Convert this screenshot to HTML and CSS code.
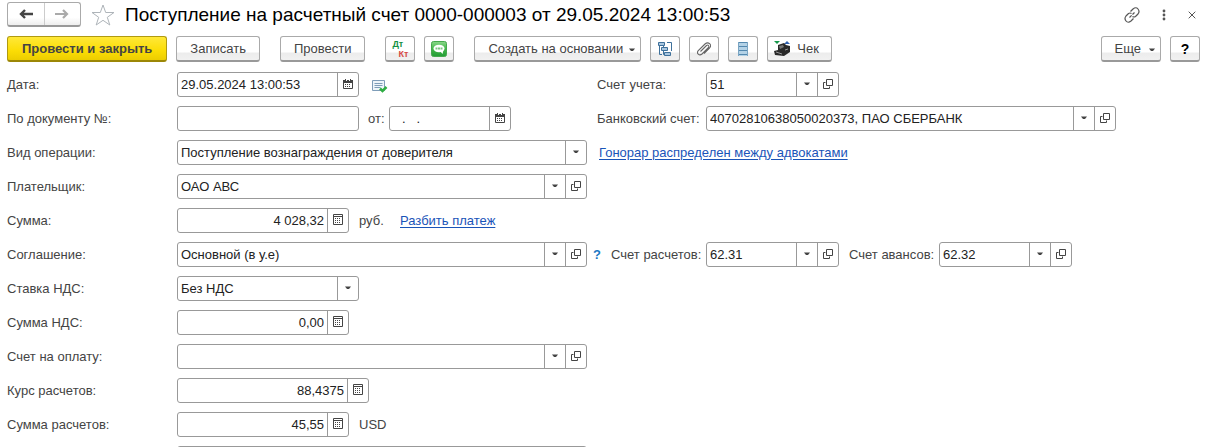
FILE: index.html
```html
<!DOCTYPE html>
<html lang="ru">
<head>
<meta charset="utf-8">
<title>Поступление на расчетный счет</title>
<link rel="stylesheet" href="styles.css">
</head>
<body>
<svg class="sprite" aria-hidden="true">
  <symbol id="caret" viewBox="0 0 6 4"><path d="M0 .5h6L4 3H2z" fill="#444"/></symbol>
  <symbol id="open" viewBox="0 0 10 10"><path d="M3.500.5h6v6h-6zM2.500 3.500h-2v6h6v-2" fill="none" stroke="#444"/></symbol>
  <symbol id="calendar" viewBox="0 0 10 10"><path d="M.5 2.500h9v7h-9z" fill="#fff" stroke="#444"/><path d="M0 1h10v3H0z" fill="#444"/><path d="M2 0h1v2H2zM7 0h1v2H7z" fill="#444"/><path d="M3 1h1v1H3zM6 1h1v1H6z" fill="#fff"/><path d="M2 5.500h6M2 7.500h6" stroke="#444" stroke-dasharray="1 1"/></symbol>
  <symbol id="calc" viewBox="0 0 10 11"><path d="M.5.5h9v10h-9zM1 2.500h8" fill="none" stroke="#444"/><path d="M2 4.500h6M2 6.500h6M2 8.500h6" stroke="#444" stroke-dasharray="1 1"/></symbol>
</svg>

<header class="header">
  <nav class="history" aria-label="История">
    <button class="history-btn" aria-label="Назад"><svg width="14" height="10" viewBox="0 0 14 10"><path d="M14 5H2M6 1 2 5l4 4" fill="none" stroke="#444" stroke-width="2.400"/></svg></button>
    <button class="history-btn" aria-label="Вперед"><svg width="14" height="10" viewBox="0 0 14 10"><path d="M0 5h12M8 1l4 4-4 4" fill="none" stroke="#aaa" stroke-width="2.200"/></svg></button>
  </nav>
  <button class="plain star" aria-label="В избранное"><svg width="24" height="22" viewBox="0 0 24 22"><path d="M12 1l2.700 7.500H23l-6.700 4.800L18.800 21 12 16.300 5.200 21l2.500-7.700L1 8.500h8.300z" fill="none" stroke="#aeb4b9"/></svg></button>
  <h1 class="title">Поступление на расчетный счет 0000-000003 от 29.05.2024 13:00:53</h1>
  <div class="window-tools">
    <button class="plain" aria-label="Ссылка"><svg width="16" height="16" viewBox="0 0 16 16"><g fill="none" stroke="#555" stroke-width="1.200"><path d="M6.500 4.500 9 2q3-2.500 5 0t0 5l-2.500 2.500q-1.500 1-3 0M9.500 11.500 7 14q-3 2.500-5 0t0-5l2.500-2.500q1.500-1 3 0"/><path d="M5.500 10.500l5-5" stroke-dasharray="3 1.200"/></g></svg></button>
    <button class="plain" aria-label="Меню"><svg width="4" height="12" viewBox="0 0 4 12"><g fill="#555"><circle cx="2" cy="2" r="1.400"/><circle cx="2" cy="6" r="1.400"/><circle cx="2" cy="10" r="1.400"/></g></svg></button>
    <button class="plain" aria-label="Закрыть"><svg width="8" height="8" viewBox="0 0 8 8"><path d="M.7.7l6.600 6.600M7.300.7.7 7.300" stroke="#555"/></svg></button>
  </div>
</header>

<div class="toolbar">
  <button class="btn btn-primary">Провести и закрыть</button>
  <button class="btn">Записать</button>
  <button class="btn apart">Провести</button>
  <button class="btn btn-icon apart" aria-label="Проводки"><span class="dtkt"><span class="dt">Дт</span><span class="kt">Кт</span></span></button>
  <button class="btn btn-icon" aria-label="Сообщение"><svg width="16" height="16" viewBox="0 0 16 16"><defs><linearGradient id="g" x2="0" y2="1"><stop stop-color="#8bd88b"/><stop offset=".5" stop-color="#42b649"/><stop offset="1" stop-color="#239b35"/></linearGradient></defs><rect x=".5" y=".5" width="15" height="15" rx="2" fill="url(#g)" stroke="#45a94d"/><ellipse cx="8" cy="7.500" rx="5.500" ry="3.800" fill="#fff"/><path d="M9 10l2.500 3 1-4z" fill="#fff"/><path d="M4.500 7.500h7" stroke="#7cc882" stroke-width="2" stroke-dasharray="2 .5"/></svg></button>
  <button class="btn btn-menu apart">Создать на основании <svg class="caret"><use href="#caret"/></svg></button>
  <button class="btn btn-icon" aria-label="Структура подчиненности"><svg width="14" height="14" viewBox="0 0 14 14"><g fill="#a9c6df" stroke="#3f719b"><path d="M.5.5h6v3h-6zM3.500 5.500h6v3h-6zM6.500 10.500h6v3h-6z"/><path d="M1.500 4v8.500H4M5.500 9v3.500h1M5.500 4v1M9 .5h4.500V9" fill="none"/></g></svg></button>
  <button class="btn btn-icon" aria-label="Файлы"><svg width="14" height="14" viewBox="0 0 14 14"><path d="M3.500 9.500l6-6q1.300-1 2 0t0 2L5 12q-2 1.700-3.700.2T1.300 8.500L8 2q2.500-2.200 4.600-.3T12.500 6L7 11.500" fill="none" stroke="#666" stroke-width="1.100"/></svg></button>
  <button class="btn btn-icon" aria-label="Журнал"><svg width="10" height="14" viewBox="0 0 10 14"><path d="M0 0h10v14H0z" fill="#b4d2e6"/><path d="M0 .5h10M0 4.500h10M0 8.500h10M0 12.500h10" stroke="#5488ae"/><path d="M.5 0v14M9.500 0v14" stroke="#7aa5c3"/></svg></button>
  <button class="btn btn-check"><svg width="18" height="16" viewBox="0 0 18 16"><path d="M1 0h6L4 3z" fill="#16984a"/><path d="M14 0l3 3h-6z" fill="#2e5fae"/><path d="M5 4l6-2 2 2 4 1v6l-6 4-9-1-1-4 4-1z" fill="#292929"/><path d="M6 5l4-1 1 2-4 2z" fill="#777"/><path d="M3 11l6 2M12 9l3-1" stroke="#999"/></svg>Чек</button>
  <div class="toolbar-end">
    <button class="btn btn-menu btn-more">Еще <svg class="caret"><use href="#caret"/></svg></button>
    <button class="btn btn-icon help">?</button>
  </div>
</div>

<form class="form">
  <div class="row">
    <label class="label" for="date">Дата:</label>
    <div class="main">
      <div class="field w-date"><input id="date" value="29.05.2024 13:00:53"><button type="button" aria-label="Календарь"><svg class="i10"><use href="#calendar"/></svg></button></div>
      <svg class="posted" width="16" height="13" viewBox="0 0 16 13"><path d="M.5.5h12v10H.5z" fill="#eef5fa" stroke="#7f9db9"/><path d="M2.500 3.500h8M2.500 5.500h8M2.500 7.500h6" stroke="#7f9db9"/><path d="M8 8.500l2.500 2.500 4-4" fill="none" stroke="#2fae43" stroke-width="2.500"/></svg>
    </div>
    <div class="side">
      <label class="side-label" for="acc">Счет учета:</label>
      <div class="field w-acc"><input id="acc" value="51"><button type="button" aria-label="Выбрать"><svg class="caret"><use href="#caret"/></svg></button><button type="button" aria-label="Открыть"><svg class="i10"><use href="#open"/></svg></button></div>
    </div>
  </div>

  <div class="row">
    <label class="label" for="num">По документу №:</label>
    <div class="main">
      <div class="field w-date"><input id="num"></div>
      <label class="from" for="from">от:</label>
      <div class="field w-from"><input id="from" class="blank-date" value=".&nbsp;&nbsp; ."><button type="button" aria-label="Календарь"><svg class="i10"><use href="#calendar"/></svg></button></div>
    </div>
    <div class="side">
      <label class="side-label" for="bank">Банковский счет:</label>
      <div class="field w-full"><input id="bank" value="40702810638050020373, ПАО СБЕРБАНК"><button type="button" aria-label="Выбрать"><svg class="caret"><use href="#caret"/></svg></button><button type="button" aria-label="Открыть"><svg class="i10"><use href="#open"/></svg></button></div>
    </div>
  </div>

  <div class="row">
    <label class="label" for="kind">Вид операции:</label>
    <div class="main">
      <div class="field w-full"><select id="kind"><option>Поступление вознаграждения от доверителя</option></select><span class="arrow"><svg class="caret"><use href="#caret"/></svg></span></div>
    </div>
    <div class="side side-link"><a class="link" href="#">Гонорар распределен между адвокатами</a></div>
  </div>

  <div class="row">
    <label class="label" for="payer">Плательщик:</label>
    <div class="main">
      <div class="field w-full"><input id="payer" value="ОАО АВС"><button type="button" aria-label="Выбрать"><svg class="caret"><use href="#caret"/></svg></button><button type="button" aria-label="Открыть"><svg class="i10"><use href="#open"/></svg></button></div>
    </div>
  </div>

  <div class="row">
    <label class="label" for="sum">Сумма:</label>
    <div class="main">
      <div class="field w-sum"><input id="sum" class="num" value="4 028,32"><button type="button" aria-label="Калькулятор"><svg class="i11"><use href="#calc"/></svg></button></div>
      <span class="unit">руб.</span>
      <a class="link" href="#">Разбить платеж</a>
    </div>
  </div>

  <div class="row">
    <label class="label" for="deal">Соглашение:</label>
    <div class="main">
      <div class="field w-full"><input id="deal" value="Основной (в у.е)"><button type="button" aria-label="Выбрать"><svg class="caret"><use href="#caret"/></svg></button><button type="button" aria-label="Открыть"><svg class="i10"><use href="#open"/></svg></button></div>
    </div>
    <div class="side side-deal">
      <button type="button" class="plain hint">?</button>
      <label class="calc-label" for="acc1">Счет расчетов:</label>
      <div class="field w-acc"><input id="acc1" value="62.31"><button type="button" aria-label="Выбрать"><svg class="caret"><use href="#caret"/></svg></button><button type="button" aria-label="Открыть"><svg class="i10"><use href="#open"/></svg></button></div>
      <label class="advance-label" for="acc2">Счет авансов:</label>
      <div class="field w-acc"><input id="acc2" value="62.32"><button type="button" aria-label="Выбрать"><svg class="caret"><use href="#caret"/></svg></button><button type="button" aria-label="Открыть"><svg class="i10"><use href="#open"/></svg></button></div>
    </div>
  </div>

  <div class="row">
    <label class="label" for="vat">Ставка НДС:</label>
    <div class="main">
      <div class="field w-date"><select id="vat"><option>Без НДС</option></select><span class="arrow"><svg class="caret"><use href="#caret"/></svg></span></div>
    </div>
  </div>

  <div class="row">
    <label class="label" for="vatsum">Сумма НДС:</label>
    <div class="main">
      <div class="field w-sum"><input id="vatsum" class="num" value="0,00"><button type="button" aria-label="Калькулятор"><svg class="i11"><use href="#calc"/></svg></button></div>
    </div>
  </div>

  <div class="row">
    <label class="label" for="invoice">Счет на оплату:</label>
    <div class="main">
      <div class="field w-full"><input id="invoice"><button type="button" aria-label="Выбрать"><svg class="caret"><use href="#caret"/></svg></button><button type="button" aria-label="Открыть"><svg class="i10"><use href="#open"/></svg></button></div>
    </div>
  </div>

  <div class="row">
    <label class="label" for="rate">Курс расчетов:</label>
    <div class="main">
      <div class="field w-rate"><input id="rate" class="num" value="88,4375"><button type="button" aria-label="Калькулятор"><svg class="i11"><use href="#calc"/></svg></button></div>
    </div>
  </div>

  <div class="row">
    <label class="label" for="total">Сумма расчетов:</label>
    <div class="main">
      <div class="field w-sum"><input id="total" class="num" value="45,55"><button type="button" aria-label="Калькулятор"><svg class="i11"><use href="#calc"/></svg></button></div>
      <span class="unit">USD</span>
    </div>
  </div>

  <div class="row">
    <span class="label"></span>
    <div class="main">
      <div class="field w-full"><input aria-label="Статья"></div>
    </div>
  </div>
</form>
</body>
</html>
```
FILE: styles.css
```css
* { box-sizing: border-box; }

body {
  margin: 0;
  padding: 2px 7px 0;
  height: 100vh;
  overflow: hidden;
  background: #fff;
  color: #444;
  font: 13px/16px "Liberation Sans", Arial, sans-serif;
}

button, input, select { font: inherit; color: inherit; margin: 0; }
button { padding: 0; cursor: pointer; }
svg { display: block; flex: none; }

.sprite { position: absolute; width: 0; height: 0; }
.caret { width: 6px; height: 4px; }
.i10 { width: 10px; height: 10px; }
.i11 { width: 10px; height: 11px; }

.plain {
  display: flex;
  align-items: center;
  justify-content: center;
  border: 0;
  background: none;
}

/* Title line */
.header { display: flex; align-items: center; height: 25px; }

.history {
  display: flex;
  width: 74px;
  height: 25px;
  border: 1px solid #aaa;
  border-bottom: 2px solid #999;
  border-radius: 3px;
  background: linear-gradient(#fff 65%, #eee);
}
.history-btn {
  display: flex;
  flex: 1;
  align-items: center;
  justify-content: center;
  border: 0;
  background: none;
}
.history-btn + .history-btn { border-left: 1px solid #ccc; }

.star { margin-left: 10px; }

.title {
  margin: 0 0 0 10px;
  color: #000;
  font-size: 19px;
  font-weight: 400;
  line-height: 24px;
  white-space: nowrap;
}

.window-tools { display: flex; align-items: center; margin-left: auto; padding-right: 4px; }
.window-tools .plain + .plain { margin-left: 22px; }

/* Command bar */
.toolbar { display: flex; gap: 9px; margin-top: 9px; }
.toolbar-end { display: flex; gap: 9px; margin-left: auto; }

.btn {
  display: flex;
  align-items: center;
  justify-content: center;
  gap: 6px;
  height: 26px;
  padding: 0 13px;
  border: 1px solid #aaa;
  border-bottom: 2px solid #999;
  border-radius: 3px;
  background: linear-gradient(#fff 65%, #ececec 70%, #f1f1f1);
  white-space: nowrap;
}
.btn-primary {
  padding: 0 14px;
  border-color: #b09a10;
  border-bottom-color: #9c8707;
  background: linear-gradient(#ffe838, #fbdd05 60%, #eccd00);
  font-weight: 700;
}
.apart { margin-left: 11px; }
.btn-icon { width: 30px; padding: 0; }
.btn-check { padding: 0 12px 0 5px; }
.btn-menu { padding-right: 5px; }
.btn-more { gap: 8px; }
.btn .caret { margin-top: 2px; }
.help { color: #000; font-weight: 700; font-size: 14px; }

.dtkt { display: flex; flex-direction: column; width: 16px; font-size: 9px; line-height: 10px; font-weight: 700; }
.dt { color: #149043; text-align: left; }
.kt { color: #d64a45; text-align: right; }

/* Form */
.form { display: flex; flex-direction: column; gap: 9px; margin-top: 10px; }
.row { display: flex; align-items: center; height: 25px; flex: none; white-space: nowrap; }
.label { width: 170px; flex: none; }
.main { display: flex; align-items: center; width: 410px; flex: none; }
.side { display: flex; align-items: center; margin-left: 10px; }
.side-label { width: 109px; }
.side-link { margin-left: 12px; }
.side-deal { margin-left: 5px; }

.field {
  position: relative;
  display: flex;
  height: 25px;
  border: 1px solid #999;
  border-radius: 3px;
  background: #fff;
  color: #222;
  overflow: hidden;
}
.field input, .field select {
  flex: 1;
  min-width: 0;
  width: 0;
  padding: 0 3px;
  border: 0;
  outline: 0;
  background: none;
  appearance: none;
}
.field button, .arrow {
  display: flex;
  align-items: center;
  justify-content: center;
  flex: none;
  width: 21px;
  padding-bottom: 2px;
  border: 0;
  border-left: 1px solid #999;
  background: none;
}
.field .arrow { position: absolute; top: 0; right: 0; bottom: 0; pointer-events: none; }
.field .num { text-align: right; }
.field .blank-date { padding-left: 12px; }

.w-date { width: 182px; }
.w-from { width: 122px; }
.w-sum { width: 172px; }
.w-rate { width: 192px; }
.w-acc { width: 133px; }
.w-full { width: 410px; }

.posted { margin: 4px 0 0 13px; }
.from { width: 30px; padding-left: 9px; }
.unit { width: 51px; padding-left: 10px; }
.link { color: #1a54b8; text-decoration: underline; text-underline-offset: 2px; }

.hint { width: 10px; margin-right: 9px; color: #1b78c4; font-weight: 700; }
.calc-label { width: 95px; }
.advance-label { width: 100px; padding-left: 10px; }
```
